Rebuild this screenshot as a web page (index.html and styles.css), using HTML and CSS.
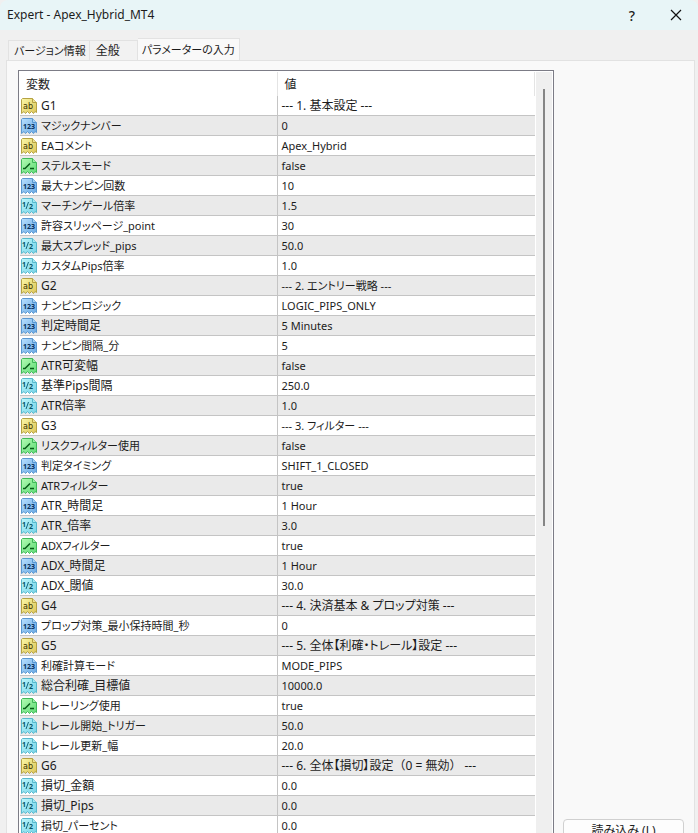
FILE: index.html
```html
<!DOCTYPE html>
<html lang="ja">
<head>
<meta charset="utf-8">
<meta name="viewport" content="width=device-width, initial-scale=1">
<title>Expert - Apex_Hybrid_MT4</title>
<link rel="stylesheet" href="styles.css">
</head>
<body>
<svg class="sprite" aria-hidden="true">
  <defs>
    <linearGradient id="g-y" x2="1" y2="1"><stop offset="0" stop-color="#fbf8a8"/><stop offset="1" stop-color="#dcc455"/></linearGradient>
    <linearGradient id="g-b" x2="1" y2="1"><stop offset="0" stop-color="#b8e0ff"/><stop offset="1" stop-color="#68a8e2"/></linearGradient>
    <linearGradient id="g-g" x2="1" y2="1"><stop offset="0" stop-color="#b4fbb4"/><stop offset="1" stop-color="#5cdb74"/></linearGradient>
    <linearGradient id="g-c" x2="1" y2="1"><stop offset="0" stop-color="#bdf6fb"/><stop offset="1" stop-color="#74d2e6"/></linearGradient>
    <path id="sheet" d="M1.5.5H11.500L15.500 4.500V14.500L14 13.500L12.500 15.500L10.500 13.500L8.500 15.500L6.500 13.500L4.500 15.500L3 13.500L.5 15.500V1.500Z"/>
    <path id="fold" d="M11.500.5V4.500H15.500"/>
    <symbol id="str" viewBox="0 0 16 16"><g stroke="#b5a244"><use href="#sheet" fill="url(#g-y)"/><use href="#fold" fill="#efe391"/></g><text class="glyph letters" x="2" y="11" fill="#3b3300">ab</text></symbol>
    <symbol id="int" viewBox="0 0 16 16"><g stroke="#5a97d0"><use href="#sheet" fill="url(#g-b)"/><use href="#fold" fill="#a5d2f5"/></g><text class="glyph" x="2" y="11" fill="#06305c">123</text></symbol>
    <symbol id="bool" viewBox="0 0 16 16"><g stroke="#40b85a"><use href="#sheet" fill="url(#g-g)"/><use href="#fold" fill="#9bf0a4"/></g><path d="M2 10.500H4L9 5.500M9 10.500H13" fill="none" stroke="#075c18" stroke-width="1.500"/></symbol>
    <symbol id="dbl" viewBox="0 0 16 16"><g stroke="#58b8cd"><use href="#sheet" fill="url(#g-c)"/><use href="#fold" fill="#a4e9f2"/></g><path d="M7.500 4L5 11" stroke="#13677a"/><text class="glyph" x="1" y="9" fill="#075466">1</text><text class="glyph" x="8" y="11" fill="#075466">2</text></symbol>
  </defs>
</svg>
<div class="dialog">
  <header class="titlebar">
    <h1>Expert - Apex_Hybrid_MT4</h1>
    <button type="button" class="caption" aria-label="ヘルプ">?</button>
    <button type="button" class="caption" aria-label="閉じる"><svg width="12" height="12" viewBox="0 0 12 12"><path d="M1 1L11 11M11 1L1 11" fill="none" stroke="#111" stroke-width="1.200"/></svg></button>
  </header>
  <nav class="tabs" role="tablist">
    <button type="button" role="tab" aria-selected="false">バージョン情報</button>
    <button type="button" role="tab" aria-selected="false">全般</button>
    <button type="button" role="tab" aria-selected="true">パラメーターの入力</button>
  </nav>
  <main class="panel">
    <div class="list">
      <table>
        <thead><tr><th scope="col">変数</th><th scope="col">値</th></tr></thead>
        <tbody>
          <tr><td><svg><use href="#str"/></svg>G1</td><td>--- 1. 基本設定 ---</td></tr>
          <tr><td class="small"><svg><use href="#int"/></svg>マジックナンバー</td><td class="small">0</td></tr>
          <tr><td class="small"><svg><use href="#str"/></svg>EAコメント</td><td class="small">Apex_Hybrid</td></tr>
          <tr><td class="small"><svg><use href="#bool"/></svg>ステルスモード</td><td class="small">false</td></tr>
          <tr><td class="small"><svg><use href="#int"/></svg>最大ナンピン回数</td><td class="small">10</td></tr>
          <tr><td class="small"><svg><use href="#dbl"/></svg>マーチンゲール倍率</td><td class="small">1.5</td></tr>
          <tr><td class="small"><svg><use href="#int"/></svg>許容スリッページ_point</td><td class="small">30</td></tr>
          <tr><td class="small"><svg><use href="#dbl"/></svg>最大スプレッド_pips</td><td class="small">50.0</td></tr>
          <tr><td class="small"><svg><use href="#dbl"/></svg>カスタムPips倍率</td><td class="small">1.0</td></tr>
          <tr><td><svg><use href="#str"/></svg>G2</td><td class="small">--- 2. エントリー戦略 ---</td></tr>
          <tr><td class="small"><svg><use href="#int"/></svg>ナンピンロジック</td><td class="small">LOGIC_PIPS_ONLY</td></tr>
          <tr><td><svg><use href="#int"/></svg>判定時間足</td><td class="small">5 Minutes</td></tr>
          <tr><td class="small"><svg><use href="#int"/></svg>ナンピン間隔_分</td><td class="small">5</td></tr>
          <tr><td><svg><use href="#bool"/></svg>ATR可変幅</td><td class="small">false</td></tr>
          <tr><td><svg><use href="#dbl"/></svg>基準Pips間隔</td><td class="small">250.0</td></tr>
          <tr><td><svg><use href="#dbl"/></svg>ATR倍率</td><td class="small">1.0</td></tr>
          <tr><td><svg><use href="#str"/></svg>G3</td><td class="small">--- 3. フィルター ---</td></tr>
          <tr><td class="small"><svg><use href="#bool"/></svg>リスクフィルター使用</td><td class="small">false</td></tr>
          <tr><td class="small"><svg><use href="#int"/></svg>判定タイミング</td><td class="small">SHIFT_1_CLOSED</td></tr>
          <tr><td class="small"><svg><use href="#bool"/></svg>ATRフィルター</td><td class="small">true</td></tr>
          <tr><td><svg><use href="#int"/></svg>ATR_時間足</td><td class="small">1 Hour</td></tr>
          <tr><td><svg><use href="#dbl"/></svg>ATR_倍率</td><td class="small">3.0</td></tr>
          <tr><td class="small"><svg><use href="#bool"/></svg>ADXフィルター</td><td class="small">true</td></tr>
          <tr><td><svg><use href="#int"/></svg>ADX_時間足</td><td class="small">1 Hour</td></tr>
          <tr><td><svg><use href="#dbl"/></svg>ADX_閾値</td><td class="small">30.0</td></tr>
          <tr><td><svg><use href="#str"/></svg>G4</td><td>--- 4. 決済基本 &amp; プロップ対策 ---</td></tr>
          <tr><td class="small"><svg><use href="#int"/></svg>プロップ対策_最小保持時間_秒</td><td class="small">0</td></tr>
          <tr><td><svg><use href="#str"/></svg>G5</td><td>--- 5. 全体【利確・トレール】設定 ---</td></tr>
          <tr><td class="small"><svg><use href="#int"/></svg>利確計算モード</td><td class="small">MODE_PIPS</td></tr>
          <tr><td><svg><use href="#dbl"/></svg>総合利確_目標値</td><td class="small">10000.0</td></tr>
          <tr><td class="small"><svg><use href="#bool"/></svg>トレーリング使用</td><td class="small">true</td></tr>
          <tr><td class="small"><svg><use href="#dbl"/></svg>トレール開始_トリガー</td><td class="small">50.0</td></tr>
          <tr><td class="small"><svg><use href="#dbl"/></svg>トレール更新_幅</td><td class="small">20.0</td></tr>
          <tr><td><svg><use href="#str"/></svg>G6</td><td>--- 6. 全体【損切】設定<span class="full">（0 = 無効）</span> ---</td></tr>
          <tr><td><svg><use href="#dbl"/></svg>損切_金額</td><td class="small">0.0</td></tr>
          <tr><td><svg><use href="#dbl"/></svg>損切_Pips</td><td class="small">0.0</td></tr>
          <tr><td class="small"><svg><use href="#dbl"/></svg>損切_パーセント</td><td class="small">0.0</td></tr>
        </tbody>
      </table>
      <div class="scrollbar"><div class="thumb"></div></div>
    </div>
    <aside class="actions"><button type="button">読み込み (L)</button></aside>
  </main>
</div>
</body>
</html>
```
FILE: styles.css
```css
* { box-sizing: border-box; }
body {
  margin: 0;
  background: #f0f0f0;
  color: #1c1c1c;
  font: 12px/19px "Noto Sans", "Noto Sans CJK JP", sans-serif;
  font-feature-settings: "palt";
}
button { font: inherit; font-feature-settings: inherit; color: inherit; }
.sprite { position: absolute; width: 0; height: 0; }
.dialog {
  display: flex;
  flex-direction: column;
  height: 100vh;
  overflow: hidden;
  border-radius: 8px 8px 0 0;
}
.titlebar {
  display: flex;
  flex: none;
  align-items: center;
  height: 30px;
  padding-left: 7px;
  background: #e8f5f7;
}
.titlebar h1 { flex: 1; margin: 0; font-size: 12px; font-weight: 400; line-height: 18px; }
.caption {
  display: flex;
  align-items: center;
  justify-content: center;
  width: 44px;
  height: 28px;
  padding: 0;
  border: 0;
  background: none;
  font-size: 14px;
  font-weight: 500;
}
.tabs {
  display: flex;
  flex: none;
  align-items: flex-end;
  height: 30px;
  padding-left: 8px;
}
.tabs button {
  height: 20px;
  padding: 0 3px 0 5px;
  border: 1px solid #e2e2e2;
  border-bottom: 0;
  background: #f2f2f2;
  font-size: 11px;
  line-height: 18px;
  white-space: nowrap;
}
.tabs button + button { padding: 0 17px 0 6px; border-left: 0; font-size: 12px; }
.tabs button[aria-selected="true"] {
  height: 22px;
  padding: 0 4px;
  background: #f9f9f9;
  font-size: 11px;
}
.panel {
  display: flex;
  flex: none;
  margin: 0 3px 0 6px;
  padding: 9px 10px 0 11px;
  border: 1px solid #e2e2e2;
  background: #f9f9f9;
}
.list {
  display: flex;
  flex: 1;
  min-width: 0;
  padding: 1px 1px 8px 1px;
  border: 1px solid #7c7c86;
  background: #fff;
}
table { flex: 1; border-collapse: separate; border-spacing: 0; table-layout: fixed; }
th, td { padding: 0 0 0 3px; text-align: left; font-weight: 400; white-space: nowrap; }
th { height: 24px; padding-left: 6px; border-right: 1px solid #e4e4e4; }
th:first-child { width: 50%; }
td { height: 20px; border-bottom: 1px solid #c4c4c4; }
td:first-child { padding-left: 1px; border-right: 1px solid #c4c4c4; }
td + td { padding-left: 4px; }
th + th { padding-left: 7px; }
tbody tr:nth-child(even) { background: #eaeaea; }
.small { font-size: 11px; }
.full { font-feature-settings: normal; }
td svg { width: 16px; height: 16px; margin: 2px 4px 0 0; vertical-align: top; }
.glyph { font: 700 7px "Noto Sans", sans-serif; }
.letters { font: 400 8px "DejaVu Sans", sans-serif; }
.scrollbar { display: flex; justify-content: center; width: 16px; margin-left: 1px; background: #efefef; }
.thumb { width: 2px; height: 437px; margin-top: 17px; background: #858585; }
.actions { display: flex; flex: none; align-items: flex-end; width: 130px; padding-left: 9px; }
.actions button {
  flex: 1;
  height: 26px;
  padding: 0 0 3px;
  border: 1px solid #d0d0d0;
  border-radius: 4px;
  background: #fdfdfd;
}
```
